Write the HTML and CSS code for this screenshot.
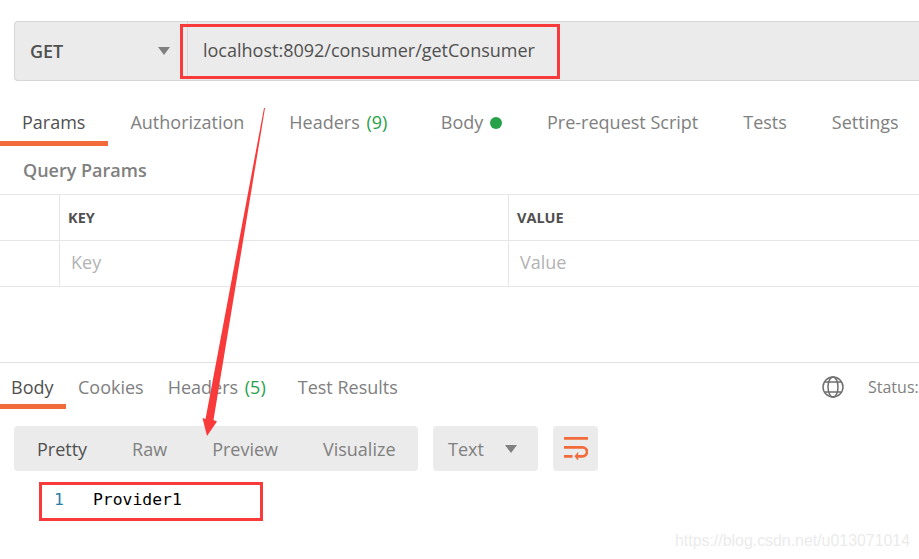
FILE: index.html
```html
<!DOCTYPE html>
<html lang="en">
<head>
<meta charset="utf-8">
<title>Postman request</title>
<link rel="stylesheet" href="styles.css">
</head>
<body>
<main class="page">
  <section class="urlbar">
    <div class="method"><span>GET</span><i class="caret"></i></div>
    <div class="url">localhost:8092/consumer/getConsumer</div>
  </section>

  <nav class="tabs req-tabs">
    <span class="tab active">Params</span>
    <span class="tab">Authorization</span>
    <span class="tab tab-wide">Headers <em class="count">(9)</em></span>
    <span class="tab">Body <i class="dot"></i></span>
    <span class="tab">Pre-request Script</span>
    <span class="tab">Tests</span>
    <span class="tab">Settings</span>
  </nav>

  <h2 class="section-title">Query Params</h2>

  <div class="table">
    <div class="row head">
      <div class="cell check"></div>
      <div class="cell key">KEY</div>
      <div class="cell value">VALUE</div>
    </div>
    <div class="row ph">
      <div class="cell check"></div>
      <div class="cell key">Key</div>
      <div class="cell value">Value</div>
    </div>
  </div>

  <section class="response">
    <div class="res-head">
      <nav class="tabs res-tabs">
        <span class="tab active">Body</span>
        <span class="tab">Cookies</span>
        <span class="tab tab-wide">Headers <em class="count">(5)</em></span>
        <span class="tab">Test Results</span>
      </nav>
      <div class="status">
        <svg class="globe" viewBox="0 0 22 22" width="22" height="22" fill="none" stroke="#6f6f6f" stroke-width="1.5">
          <circle cx="11" cy="11" r="10"/>
          <ellipse cx="11" cy="11" rx="5" ry="10"/>
          <path d="M2.600 6h16.800M2.600 16h16.800"/>
        </svg>
        <span class="status-text">Status:</span>
      </div>
    </div>
    <div class="toolbar">
      <div class="seg">
        <span class="seg-item on">Pretty</span>
        <span class="seg-item">Raw</span>
        <span class="seg-item">Preview</span>
        <span class="seg-item">Visualize</span>
      </div>
      <div class="select"><span>Text</span><i class="caret"></i></div>
      <div class="wrap">
        <svg viewBox="0 0 24 23" width="24" height="23" fill="none" stroke="#f26b3a" stroke-width="2.700">
          <path d="M0 1.300h24M0 10.300h18.500a4.500 4.500 0 0 1 0 9H13M0 19.300h8.500"/>
          <path d="M14.200 14.800v9L10.500 19.300z" fill="#f26b3a" stroke="none"/>
        </svg>
      </div>
    </div>
    <div class="code"><span class="ln">1</span><span class="src">Provider1</span></div>
  </section>
</main>

<svg class="annot" viewBox="0 0 919 559" width="919" height="559" aria-hidden="true">
  <rect class="box" x="181.500" y="25.500" width="377" height="52"/>
  <rect class="box" x="40.500" y="483.500" width="221" height="36"/>
  <polygon class="arrow" points="264,108 265,108 213.500,420 217,421.500 207,436 202.500,418 205.500,419"/>
</svg>

<div class="watermark">https://blog.csdn.net/u013071014</div>
</body>
</html>
```
FILE: styles.css
```css
* { box-sizing: border-box; }
html, body { margin: 0; padding: 0; background: #fff; }
body {
  width: 919px;
  height: 559px;
  overflow: hidden;
  position: relative;
  font-family: "Open Sans", "Noto Sans", sans-serif;
  font-size: 18px;
  color: #808080;
}
.page { display: flex; flex-direction: column; height: 559px; padding-top: 21px; }

.urlbar {
  display: flex;
  height: 60px;
  margin-left: 14px;
  background: #ebebeb;
  border: 1px solid #d6d6d6;
  border-right: 0;
  border-radius: 4px 0 0 4px;
}
.method {
  width: 173px;
  display: flex;
  align-items: center;
  justify-content: space-between;
  padding: 0 17px 0 15px;
  border-right: 1px solid #d6d6d6;
  font-weight: 600;
  color: #505050;
  font-size: 18px;
}
.caret {
  width: 0;
  height: 0;
  border-left: 6px solid transparent;
  border-right: 6px solid transparent;
  border-top: 8px solid #808080;
}
.url { padding-left: 15px; line-height: 56px; font-size: 18px; color: #505050; }

.tabs { display: flex; }
.req-tabs { margin-top: 19px; height: 46px; }
.tab {
  padding: 0 22.500px;
  height: 46px;
  line-height: 45px;
  white-space: nowrap;
  font-size: 18px;
}
.req-tabs .tab:first-child { padding-left: 22px; }
.req-tabs .tab-wide { margin-right: 8.500px; }
.tab.active { color: #505050; border-bottom: 5px solid #f26b3a; }
.tab em { font-style: normal; }
.count { color: #26a14a; margin-left: 2px; }
.dot {
  display: inline-block;
  width: 12px;
  height: 12px;
  margin-left: 2px;
  border-radius: 50%;
  background: #26a14a;
}

.section-title {
  margin: 12px 0 0 23px;
  height: 36px;
  font-size: 18px;
  line-height: 24px;
  font-weight: 600;
  color: #808080;
}

.table { border-top: 1px solid #e6e6e6; }
.row { display: flex; height: 46px; border-bottom: 1px solid #e6e6e6; }
.cell { display: flex; align-items: center; }
.check { width: 60px; border-right: 1px solid #e6e6e6; }
.key { width: 449px; border-right: 1px solid #e6e6e6; padding-left: 8px; }
.value { padding-left: 8px; }
.head .cell { font-size: 14.500px; font-weight: 700; color: #505050; }
.ph .key, .ph .value { padding: 0 0 3px 11px; font-size: 18px; color: #b3b3b3; }

.response { margin-top: 75px; border-top: 1px solid #e0e0e0; }
.res-head { display: flex; justify-content: space-between; height: 47px; }
.res-tabs .tab { padding: 0 12px; line-height: 49px; }
.res-tabs .tab.active { padding: 0 12px 0 11px; width: 66px; }
.res-tabs .tab-wide { margin-right: 8px; }
.status { display: flex; align-items: center; width: 97px; gap: 24px; flex: none; white-space: nowrap; }
.status .globe { flex: none; }
.status-text { font-size: 16px; }

.toolbar { display: flex; gap: 15px; margin: 16px 0 0 14px; height: 45px; }
.seg {
  display: flex;
  width: 404px;
  align-items: center;
  justify-content: space-between;
  padding: 0 22.500px 0 23px;
  background: #ebebeb;
  border-radius: 4px;
  font-size: 18px;
}
.seg-item.on { color: #505050; }
.select {
  width: 105px;
  display: flex;
  align-items: center;
  justify-content: space-between;
  padding: 0 21px 0 15px;
  background: #ebebeb;
  border-radius: 4px;
  font-size: 18px;
}
.wrap {
  width: 45px;
  display: flex;
  align-items: center;
  justify-content: center;
  background: #ebebeb;
  border-radius: 4px;
}

.code {
  display: flex;
  margin: 17px 0 0 54px;
  font-family: "DejaVu Sans Mono", "Liberation Mono", monospace;
  font-size: 16.400px;
  line-height: 24px;
  color: #000;
}
.ln { width: 39px; color: #2a7ea8; }

.annot { position: absolute; left: 0; top: 0; pointer-events: none; }
.box { fill: none; stroke: #f93a3a; stroke-width: 3; }
.arrow { fill: #f93a3a; }

.watermark {
  position: absolute;
  right: 9px;
  top: 532px;
  font-family: "Liberation Sans", Arial, sans-serif;
  font-size: 15.900px;
  line-height: 18px;
  color: #ebebeb;
}
```
